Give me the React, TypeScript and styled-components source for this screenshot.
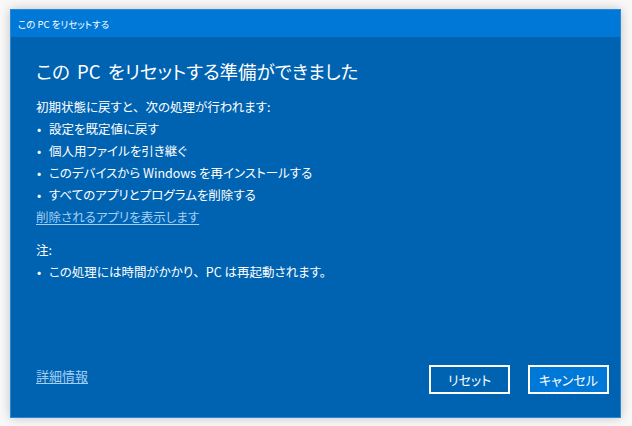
import React from "react";
import styled, { createGlobalStyle } from "styled-components";

const Global = createGlobalStyle`
  html, body { margin: 0; padding: 0; background: #f8f8f8; }
  body {
    font-family: "Noto Sans CJK JP", "Noto Sans", sans-serif;
    font-feature-settings: "palt" 1;
  }
`;

const Stage = styled.div`
  width: 632px;
  height: 426px;
  padding: 9px 0 0 10px;
  box-sizing: border-box;
`;

const Window = styled.div`
  width: 611px;
  height: 409px;
  box-sizing: border-box;
  border: 1px solid #2a86d6;
  background: #0063b1;
  box-shadow: 0 0 10px rgba(0, 0, 0, 0.22);
  display: flex;
  flex-direction: column;
  color: #fff;
`;

const TitleBar = styled.div`
  height: 27px;
  flex: none;
  background: #0078d7;
  display: flex;
  align-items: center;
  padding-left: 7px;
  font-size: 9.5px;
`;

const Body = styled.div`
  flex: 1;
  display: flex;
  flex-direction: column;
  padding: 20px 11px 23px 25px;
`;

const Heading = styled.h1`
  margin: 0 0 11px;
  font-size: 18.5px;
  font-weight: 400;
  line-height: 28px;
  word-spacing: 3px;
`;

const Line = styled.div<{ $gap?: number }>`
  font-size: 12.5px;
  line-height: 22px;
  margin-top: ${(p) => p.$gap ?? 0}px;
`;

const Bullet = styled.div`
  font-size: 12.5px;
  line-height: 22px;
  display: flex;
  &::before {
    content: "•";
    width: 12px;
    padding-left: 1px;
    flex: none;
  }
`;

const Comma = styled.span`
  font-feature-settings: normal;
`;

const Link = styled.a`
  font-size: 12.5px;
  line-height: 22px;
  color: #a3cff5;
  text-decoration: underline;
  text-underline-offset: 2px;
  align-self: flex-start;
`;

const DetailLink = styled(Link)`
  font-size: 13px;
`;

const Footer = styled.div`
  margin-top: auto;
  display: flex;
  align-items: center;
`;

const Buttons = styled.div`
  margin-left: auto;
  display: flex;
  gap: 18px;
`;

const Button = styled.button<{ $primary?: boolean }>`
  width: 81px;
  height: 29px;
  box-sizing: border-box;
  border: 2px solid #fff;
  background: ${(p) => (p.$primary ? "#0078d7" : "transparent")};
  color: #fff;
  font-family: inherit;
  font-feature-settings: "palt" 1;
  font-size: 13px;
  padding: 0;
`;

export default function App() {
  return (
    <>
      <Global />
      <Stage>
        <Window>
          <TitleBar>この PC をリセットする</TitleBar>
          <Body>
            <Heading>この PC をリセットする準備ができました</Heading>
            <Line>
              初期状態に戻すと<Comma>、</Comma>次の処理が行われます:
            </Line>
            <Bullet>設定を既定値に戻す</Bullet>
            <Bullet>個人用ファイルを引き継ぐ</Bullet>
            <Bullet>このデバイスから Windows を再インストールする</Bullet>
            <Bullet>すべてのアプリとプログラムを削除する</Bullet>
            <Link>削除されるアプリを表示します</Link>
            <Line $gap={11}>注:</Line>
            <Bullet>
              <span>
                この処理には時間がかかり<Comma>、</Comma>PC は再起動されます。
              </span>
            </Bullet>
            <Footer>
              <DetailLink>詳細情報</DetailLink>
              <Buttons>
                <Button>リセット</Button>
                <Button $primary>キャンセル</Button>
              </Buttons>
            </Footer>
          </Body>
        </Window>
      </Stage>
    </>
  );
}
